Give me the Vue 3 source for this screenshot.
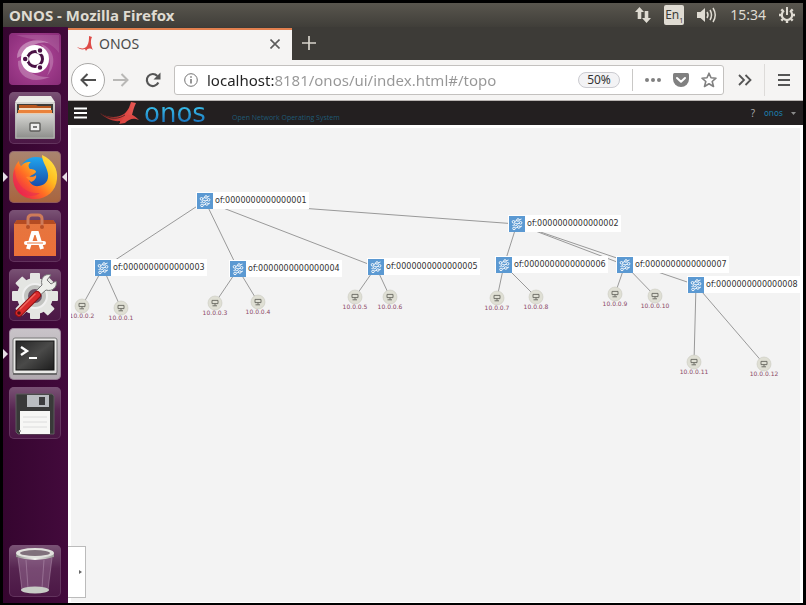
<script setup>
import { ref } from 'vue'

const address = ref('localhost:8181/onos/ui/index.html#/topo')

const devices = [
  { id: 1, x: 205, y: 201 },
  { id: 2, x: 517, y: 224 },
  { id: 3, x: 103, y: 268 },
  { id: 4, x: 238, y: 269 },
  { id: 5, x: 376, y: 267 },
  { id: 6, x: 504, y: 265 },
  { id: 7, x: 625, y: 265 },
  { id: 8, x: 696, y: 285 },
].map((d) => ({ ...d, label: 'of:' + String(d.id).padStart(16, '0') }))

const hosts = [
  { ip: '10.0.0.2', x: 82, y: 306, device: 3 },
  { ip: '10.0.0.1', x: 121, y: 308, device: 3 },
  { ip: '10.0.0.3', x: 215, y: 303, device: 4 },
  { ip: '10.0.0.4', x: 258, y: 302, device: 4 },
  { ip: '10.0.0.5', x: 355, y: 297, device: 5 },
  { ip: '10.0.0.6', x: 390, y: 297, device: 5 },
  { ip: '10.0.0.7', x: 497, y: 298, device: 6 },
  { ip: '10.0.0.8', x: 536, y: 297, device: 6 },
  { ip: '10.0.0.9', x: 615, y: 294, device: 7 },
  { ip: '10.0.0.10', x: 655, y: 296, device: 7 },
  { ip: '10.0.0.11', x: 694, y: 362, device: 8 },
  { ip: '10.0.0.12', x: 764, y: 364, device: 8 },
]

const device = (id) => devices.find((d) => d.id === id)

const links = [
  [1, 2], [1, 3], [1, 4], [1, 5], [2, 6], [2, 7], [2, 8],
].map(([a, b]) => ({ from: device(a), to: device(b) }))

const hostLinks = hosts.map((h) => ({ from: device(h.device), to: h }))
</script>

<template>
  <div class="screen">
    <header class="panel">
      <h1 class="window-title">ONOS - Mozilla Firefox</h1>
      <div class="tray">
        <svg class="tray-net" width="18" height="18" viewBox="0 0 18 18" aria-hidden="true">
          <path d="M5.500 1 L10 6 H7.300 V13 H3.700 V6 H1Z M12.500 17 L8 12 H10.700 V5 H14.300 V12 H17Z" />
        </svg>
        <span class="tray-lang">En<sub>1</sub></span>
        <svg width="22" height="18" viewBox="0 0 22 18" aria-hidden="true">
          <path d="M1 6 H4.500 L9 2 V16 L4.500 12 H1Z" />
          <g fill="none" stroke="#dfdbd2" stroke-width="1.500">
            <path d="M11 6 Q13 9 11 12" />
            <path d="M14 4 Q17 9 14 14" />
            <path d="M17 2 Q21.500 9 17 16" />
          </g>
        </svg>
        <time class="clock">15:34</time>
        <svg width="18" height="18" viewBox="0 0 18 18" aria-hidden="true">
          <g fill="none" stroke="#dfdbd2">
            <path d="M6 4.600 A5.200 5.200 0 1 0 12 4.600" stroke-width="2.200" />
            <path d="M9 1 V9" stroke-width="2" />
            <path d="M1 9 H3.500 M14.500 9 H17 M9 14.500 V17 M3.300 3.300 L5 5 M14.700 3.300 L13 5 M3.300 14.700 L5 13 M14.700 14.700 L13 13" stroke-width="2.400" />
          </g>
        </svg>
      </div>
    </header>

    <div class="desktop">
      <nav class="launcher" aria-label="Launcher">
        <button class="tile dash" aria-label="Dash">
          <svg viewBox="0 0 52 52">
            <defs>
              <radialGradient id="dashBg" cx="0.5" cy="0.5" r="0.75">
                <stop offset="0" stop-color="#b34a9b" />
                <stop offset="1" stop-color="#862a76" />
              </radialGradient>
            </defs>
            <rect width="52" height="52" rx="4" fill="url(#dashBg)" />
            <path d="M8 25 C8 10 25 3 40 10 C31 8 20 12 16 21Z" fill="#fff" opacity="0.35" />
            <path d="M32 11 C45 15 49 31 38 43 C43 32 41 24 36 17Z" fill="#fff" opacity="0.22" />
            <path d="M9 28 C8 43 22 52 41 44 C29 45 17 40 13 27Z" fill="#fff" opacity="0.25" />
            <path d="M7 2 C25 8 41 6 50 20 V2Z" fill="#fff" opacity="0.12" />
            <circle cx="26" cy="26" r="14" fill="#fff" />
            <circle cx="26" cy="26" r="7.500" fill="none" stroke="#4a1145" stroke-width="3" />
            <g fill="#4a1145" stroke="#fff" stroke-width="1.300">
              <circle cx="16.200" cy="26" r="2.900" />
              <circle cx="31" cy="17.500" r="2.900" />
              <circle cx="31" cy="34.500" r="2.900" />
            </g>
          </svg>
        </button>
        <button class="tile" aria-label="Files">
          <svg viewBox="0 0 52 52">
            <defs>
              <linearGradient id="cabinet" x2="0" y2="1">
                <stop offset="0" stop-color="#d6d6d3" />
                <stop offset="1" stop-color="#8d8e8b" />
              </linearGradient>
            </defs>
            <path d="M10 4 H42 L46 10 H6Z" fill="#ecece8" />
            <rect x="6" y="10" width="40" height="37" rx="1" fill="url(#cabinet)" />
            <rect x="8" y="12" width="36" height="11" fill="#3f3d3a" />
            <path d="M10 13 H27 L29 14 H42 V17 H10Z" fill="#b8571f" />
            <path d="M10 16 H42 V19 H10Z" fill="#f3e0c8" />
            <path d="M9 18 H43 V22 H9Z" fill="#ea823b" />
            <path d="M8 21 H44 V22 H8Z" fill="#f7cfa8" />
            <rect x="7" y="22" width="38" height="24" fill="url(#cabinet)" stroke="#c9c9c6" stroke-width="0.600" />
            <rect x="21" y="31" width="10" height="8" rx="1" fill="#eee" stroke="#5d5d5b" stroke-width="1.400" />
            <rect x="24" y="34" width="4" height="2" fill="#777" />
          </svg>
        </button>
        <button class="tile firefox active" aria-label="Firefox">
          <svg viewBox="0 0 52 52">
            <defs>
              <linearGradient id="foxTail" x1="1" y1="0" x2="0" y2="1">
                <stop offset="0" stop-color="#fff04d" />
                <stop offset="0.350" stop-color="#ffbc20" />
                <stop offset="0.600" stop-color="#ff6b25" />
                <stop offset="0.850" stop-color="#ef2749" />
                <stop offset="1" stop-color="#d71265" />
              </linearGradient>
              <linearGradient id="globe" x2="0" y2="1">
                <stop offset="0" stop-color="#20a5ef" />
                <stop offset="1" stop-color="#173f9e" />
              </linearGradient>
            </defs>
            <circle cx="27" cy="23" r="17" fill="url(#globe)" />
            <path d="M33 4 C44 9 49 18 48 28 C47 40 38 48 26 48 C13 48 4 39 4 26 C4 20 6 14 10 10 C10 13 11 14 12 15 C15 11 19 11 22 11 C19 13 19 16 21 18 C24 18 27 19 27 21 C25 24 21 24 20 27 C20 32 24 36 30 35 C38 34 41 27 38 19 C37 15 33 10 33 4Z" fill="url(#foxTail)" />
            <path d="M6 18 C6 34 17 43 31 42 C22 49 8 43 5 32 C3 27 4 22 6 18Z" fill="#e62756" opacity="0.500" />
            <path d="M17 26 C20 25 24 27 27 24 C28 27 25 30 22 31Z" fill="#ff8a2a" />
          </svg>
        </button>
        <button class="tile" aria-label="Ubuntu Software">
          <svg viewBox="0 0 52 52">
            <defs>
              <linearGradient id="bag" x2="0" y2="1">
                <stop offset="0" stop-color="#e5763f" />
                <stop offset="1" stop-color="#ec7039" />
              </linearGradient>
            </defs>
            <path d="M8 10 H44 L47 14 V46 H5 V14Z" fill="url(#bag)" />
            <path d="M8 10 H44 L47 14 H5Z" fill="#b44b22" />
            <path d="M19 17 V9 Q19 5 23 5 H29 Q33 5 33 9 V17" fill="none" stroke="#ce7b5a" stroke-width="3" />
            <circle cx="19" cy="17" r="2" fill="#b75027" />
            <circle cx="33" cy="17" r="2" fill="#b75027" />
            <g fill="none" stroke="#fff" stroke-width="4">
              <path d="M19 39 L24 23 H28 L33 39" />
              <path d="M17 33 H35" stroke-width="4" stroke-linecap="round" />
            </g>
            <path d="M18 33 H34" stroke="#e8743d" stroke-width="1" />
          </svg>
        </button>
        <button class="tile" aria-label="System Settings">
          <svg viewBox="0 0 52 52">
            <g fill="#e4e5e2">
              <circle cx="26" cy="27" r="18" />
              <rect v-for="a in 8" :key="a" x="21" y="4" width="10" height="10" rx="1" :transform="`rotate(${a * 45} 26 27)`" />
            </g>
            <circle cx="26" cy="27" r="12" fill="#c3c4c1" stroke="#f0f0f0" stroke-width="2" />
            <circle cx="26" cy="27" r="7" fill="#6a5064" />
            <path d="M25 24 L33 16 C31 9 36 4 42 6 L38 11 L42 15 L47 12 C49 18 43 23 37 21 L29 28Z" fill="#eeefeb" stroke="#777" stroke-width="1" />
            <path d="M28 26 L10 44" stroke="#8e1114" stroke-width="8" stroke-linecap="round" />
            <path d="M28 26 L10 44" stroke="#d82a2b" stroke-width="6" stroke-linecap="round" />
            <path d="M26 25 L11 40" stroke="#f06a62" stroke-width="1.500" stroke-linecap="round" />
            <circle cx="10" cy="44" r="1.800" fill="#501417" />
          </svg>
        </button>
        <button class="tile terminal running" aria-label="Terminal">
          <svg viewBox="0 0 52 52">
            <defs>
              <linearGradient id="term" x1="0" y1="0" x2="1" y2="1">
                <stop offset="0" stop-color="#262626" />
                <stop offset="0.500" stop-color="#4a4a49" />
                <stop offset="1" stop-color="#1d1d1d" />
              </linearGradient>
            </defs>
            <rect x="4" y="10" width="44" height="36" rx="2" fill="#e9e9e7" stroke="#777" />
            <rect x="7" y="13" width="38" height="29" fill="url(#term)" stroke="#151515" />
            <path d="M12 19 L18 23 L12 27" fill="none" stroke="#fff" stroke-width="2.400" />
            <path d="M20 30 H28" stroke="#fff" stroke-width="2" />
            <path d="M4 46 H48" stroke="#5b5b5b" stroke-width="1.500" />
          </svg>
        </button>
        <button class="tile" aria-label="Floppy disk">
          <svg viewBox="0 0 52 52">
            <path d="M7 7 H43 L45 9 V47 H9 L7 45Z" fill="#393939" stroke="#5d5d5d" />
            <rect x="18" y="8" width="22" height="12" fill="#b9bcc0" />
            <rect x="30" y="10" width="6" height="8" fill="#3d3d3f" />
            <rect x="11" y="24" width="30" height="23" fill="#f7f7f5" />
            <path d="M14 30 H38 M14 35 H38 M14 40 H38" stroke="#dcdcdc" />
            <rect x="10" y="43" width="2" height="2" fill="#aaa" />
          </svg>
        </button>
        <button class="tile trash" aria-label="Trash">
          <svg viewBox="0 0 52 52">
            <defs>
              <linearGradient id="rim" x2="1" y2="0">
                <stop offset="0" stop-color="#8f8f8c" />
                <stop offset="0.500" stop-color="#f3f3ef" />
                <stop offset="1" stop-color="#9b9b98" />
              </linearGradient>
            </defs>
            <path d="M9 12 L13 45 Q26 51 39 45 L43 12Z" fill="#b892b4" opacity="0.350" />
            <path d="M9 13 L13 45 M43 13 L39 45 M17 15 L19 43 M35 15 L33 43" stroke="#c7abc4" opacity="0.400" />
            <ellipse cx="26" cy="45" rx="14" ry="3.500" fill="#c7cbc5" />
            <path d="M7 8 V12 Q26 18 45 12 V8Z" fill="url(#rim)" />
            <ellipse cx="26" cy="8" rx="19" ry="5" fill="#e2e2de" />
            <ellipse cx="26" cy="8" rx="15" ry="3" fill="#80717c" />
          </svg>
        </button>
      </nav>

      <main class="browser">
        <div class="tabs">
          <div class="tab">
            <svg width="17" height="16" viewBox="0 0 17 16" aria-hidden="true">
              <path d="M0 11 C4 13 8 13 10 10 C12 7 12 3 12 0 L15 1 C13 5 14 10 16 14 C13 12 11 12 9 15 L8 13 C5 14 2 13 0 11Z" fill="#de4b47" />
            </svg>
            <span class="tab-title">ONOS</span>
            <button class="tab-close" aria-label="Close tab">
              <svg width="10" height="10" viewBox="0 0 10 10"><path d="M0.500 0.500 L9.500 9.500 M9.500 0.500 L0.500 9.500" stroke="#5c5c5c" stroke-width="1.600" /></svg>
            </button>
          </div>
          <button class="tab-new" aria-label="New tab">
            <svg width="14" height="14" viewBox="0 0 14 14"><path d="M7 0 V14 M0 7 H14" stroke="#d7d4cb" stroke-width="1.700" /></svg>
          </button>
        </div>

        <div class="toolbar">
          <button class="back" aria-label="Back">
            <svg width="16" height="14" viewBox="0 0 16 14"><path d="M16 7 H1.500 M7.500 1 L1.500 7 L7.500 13" fill="none" stroke="#4f4f4f" stroke-width="2" /></svg>
          </button>
          <button class="tool forward" aria-label="Forward">
            <svg width="16" height="14" viewBox="0 0 16 14"><path d="M0 7 H14.500 M8.500 1 L14.500 7 L8.500 13" fill="none" stroke="#b9b8b6" stroke-width="2" /></svg>
          </button>
          <button class="tool reload" aria-label="Reload">
            <svg width="16" height="16" viewBox="0 0 16 16"><path d="M13.300 10.500 A6 6 0 1 1 12.300 4" fill="none" stroke="#555" stroke-width="2.200" /><path d="M15.500 0.500 V7.500 H8.500Z" fill="#555" /></svg>
          </button>
          <div class="urlbar">
            <svg width="14" height="14" viewBox="0 0 14 14" aria-hidden="true">
              <circle cx="7" cy="7" r="6.300" fill="none" stroke="#737373" />
              <path d="M7 6 V10.500 M7 3.200 V4.800" stroke="#737373" stroke-width="1.500" />
            </svg>
            <input v-model="address" class="address" type="text" aria-label="Address" spellcheck="false" />
            <button class="zoom">50%</button>
            <span class="rule"></span>
            <button class="tool" aria-label="Page actions">
              <svg width="16" height="16" viewBox="0 0 16 16" fill="#808080"><circle cx="2" cy="8" r="2" /><circle cx="8" cy="8" r="2" /><circle cx="14" cy="8" r="2" /></svg>
            </button>
            <button class="tool" aria-label="Save to Pocket">
              <svg width="16" height="16" viewBox="0 0 16 16"><path d="M1.500 1 H14.500 Q16 1 16 2.500 V7 A8 8 0 0 1 0 7 V2.500 Q0 1 1.500 1Z" fill="#808080" /><path d="M4 6 L8 9.800 L12 6" fill="none" stroke="#fff" stroke-width="2" stroke-linecap="round" stroke-linejoin="round" /></svg>
            </button>
            <button class="tool" aria-label="Bookmark">
              <svg width="16" height="16" viewBox="0 0 16 16"><path d="M8 1.200 L10 5.800 L15 6.200 L11.200 9.500 L12.500 14.500 L8 11.800 L3.500 14.500 L4.800 9.500 L1 6.200 L6 5.800Z" fill="none" stroke="#808080" stroke-width="1.600" stroke-linejoin="round" /></svg>
            </button>
          </div>
          <button class="tool more" aria-label="More tools">
            <svg width="14" height="12" viewBox="0 0 14 12"><path d="M1 1 L6 6 L1 11 M7.500 1 L12.500 6 L7.500 11" fill="none" stroke="#555" stroke-width="1.800" /></svg>
          </button>
          <span class="rule tall"></span>
          <button class="tool menu" aria-label="Open menu">
            <svg width="12" height="12" viewBox="0 0 12 12"><path d="M0 1 H12 M0 6 H12 M0 11 H12" stroke="#555" stroke-width="2" /></svg>
          </button>
        </div>

        <div class="masthead">
          <button class="nav-toggle" aria-label="Navigation">
            <svg width="13" height="12" viewBox="0 0 13 12"><path d="M0 1.500 H13 M0 6 H13 M0 10.500 H13" stroke="#fff" stroke-width="2" /></svg>
          </button>
          <svg class="bird" width="40" height="24" viewBox="0 0 40 24" aria-hidden="true">
            <defs>
              <linearGradient id="birdRed" x2="1" y2="0">
                <stop offset="0" stop-color="#7e2422" />
                <stop offset="0.600" stop-color="#d9403c" />
                <stop offset="1" stop-color="#e75b56" />
              </linearGradient>
            </defs>
            <path d="M0 12 C8 17 18 17 24 13 C29 9 30 4 31 1 L36 2 C34 6 33 10 32 14 L34 15 L31 15 C26 17 25 20 20 22 L20 20 C13 21 5 17 0 12Z" fill="url(#birdRed)" />
            <path d="M25 15 C31 12 35 15 39 19 L36 18 C32 17 28 19 25 22 L19 23 L23 18Z" fill="#dd4944" />
            <path d="M2 13 C11 19 19 18 25 14" fill="none" stroke="#231f20" stroke-width="0.700" />
          </svg>
          <span class="wordmark">onos</span>
          <span class="tagline">Open Network Operating System</span>
          <a class="help" href="#help">?</a>
          <button class="user">onos <svg width="5" height="3" viewBox="0 0 5 3"><path d="M0 0 H5 L2.500 3Z" fill="#8b8b8b" /></svg></button>
        </div>

        <div class="view">
          <svg class="topology" viewBox="71 128 729 474" preserveAspectRatio="xMinYMin meet" role="img" aria-label="Network topology">
            <g class="links">
              <line v-for="(l, i) in links" :key="'d' + i" :x1="l.from.x" :y1="l.from.y" :x2="l.to.x" :y2="l.to.y" />
              <line v-for="(l, i) in hostLinks" :key="'h' + i" :x1="l.from.x" :y1="l.from.y" :x2="l.to.x" :y2="l.to.y" />
            </g>
            <g v-for="d in devices" :key="d.id" :transform="`translate(${d.x} ${d.y})`">
              <rect x="-9" y="-9" width="113" height="17" fill="#fff" />
              <rect x="-8" y="-8" width="16" height="16" fill="#5b99d2" />
              <g fill="none" stroke="#fff" stroke-width="0.900">
                <path d="M-2.300 -2.500 L0 -3.500 M2.300 -4.200 L4.500 -5 M-4.500 1.500 L-2.500 0.900 M0 0 L2.300 -0.800 M-1.700 4 L0.500 3.400 M3 2.800 L5 2" />
                <circle cx="-3.500" cy="-2.200" r="1.300" />
                <circle cx="1" cy="-4" r="1.300" />
                <circle cx="-1.200" cy="0.500" r="1.300" />
                <circle cx="3.600" cy="-1.200" r="1.300" />
                <circle cx="-3" cy="4.400" r="1.300" />
                <circle cx="1.800" cy="3" r="1.300" />
              </g>
              <text class="device-label" x="10" y="2">{{ d.label }}</text>
            </g>
            <g v-for="h in hosts" :key="h.ip" :transform="`translate(${h.x} ${h.y})`">
              <circle r="7" fill="#dfdfd4" stroke="#c9c9bf" stroke-width="0.600" />
              <path d="M-3 -2.600 H3 V0.600 H-3Z M0 0.600 V2.600 M-2.500 2.800 H2" fill="none" stroke="#66665f" stroke-width="0.900" />
              <text class="host-label" y="12">{{ h.ip }}</text>
            </g>
          </svg>
          <button class="drawer" aria-label="Open topology toolbar">
            <svg width="3" height="4" viewBox="0 0 3 4"><path d="M0 0 L3 2 L0 4Z" fill="#666" /></svg>
          </button>
        </div>
      </main>
    </div>
  </div>
</template>

<style>
body {
  margin: 0;
  background: #000;
}
</style>

<style scoped>
.screen {
  box-sizing: border-box;
  min-height: 100vh;
  padding: 3px 3px 2px;
  display: flex;
  flex-direction: column;
  background: #000;
  font-family: "Noto Sans", "Open Sans", sans-serif;
}

button {
  display: flex;
  align-items: center;
  justify-content: center;
  margin: 0;
  padding: 0;
  border: 0;
  background: none;
  font: inherit;
  color: inherit;
}

.panel {
  display: flex;
  align-items: center;
  justify-content: space-between;
  height: 24px;
  padding: 0 7px 0 6px;
  background: linear-gradient(#59564e, #403e39);
  color: #dfdbd2;
}

.window-title {
  margin: 0;
  font-size: 15px;
  font-weight: 700;
  line-height: 24px;
}

.tray {
  display: flex;
  align-items: center;
  gap: 12px;
  fill: #dfdbd2;
}

.tray-lang {
  display: flex;
  align-items: center;
  justify-content: center;
  width: 20px;
  height: 20px;
  border-radius: 2px;
  background: #dfdbd2;
  color: #3c3b37;
  font-size: 12px;
  line-height: 20px;
}

.tray-lang sub {
  align-self: flex-end;
  font-size: 7px;
  line-height: 9px;
}

.clock {
  font-size: 14px;
  line-height: 24px;
}

.desktop {
  flex: 1;
  display: flex;
}

.launcher {
  box-sizing: border-box;
  flex: none;
  display: flex;
  flex-direction: column;
  gap: 7px;
  width: 65px;
  padding: 6px 6px 6px;
  background: linear-gradient(90deg, #35052f, #430a3c);
}

.tile {
  position: relative;
  width: 52px;
  height: 52px;
  border-radius: 5px;
  background: linear-gradient(#7a5375, #562450 45%, #4b1745);
  box-shadow: inset 0 0 0 1px #79507580;
}

.tile svg {
  width: 52px;
  height: 52px;
}

.firefox {
  background: linear-gradient(#a98570, #a8643e);
}

.terminal {
  background: linear-gradient(#c9c4c9, #b0a9af);
}

.trash {
  margin-top: auto;
}

.active::before,
.running::before,
.active::after {
  content: "";
  position: absolute;
  top: 21px;
  border: 5px solid transparent;
}

.active::before,
.running::before {
  left: -6px;
  border-right-width: 0;
  border-left-color: #e6dde5;
}

.active::after {
  right: -6px;
  border-left-width: 0;
  border-right-color: #e6dde5;
}

.browser {
  flex: 1;
  min-width: 0;
  display: flex;
  flex-direction: column;
  background: #f2f1f0;
}

.tabs {
  display: flex;
  height: 33px;
  background: #3d3b37;
}

.tab {
  box-sizing: border-box;
  display: flex;
  align-items: center;
  gap: 5px;
  width: 224px;
  margin-top: 1px;
  padding: 0 12px 3px 9px;
  border-top: 2px solid #e2804f;
  background: #f5f4f3;
  color: #4c4c4c;
}

.tab-title {
  flex: 1;
  font-size: 14px;
}

.tab-new {
  width: 34px;
  height: 32px;
}

.toolbar {
  box-sizing: border-box;
  display: flex;
  align-items: center;
  height: 41px;
  padding: 0 13px 0 3px;
  border-bottom: 1px solid #b9b4b2;
  background: #f5f4f3;
}

.back {
  box-sizing: border-box;
  flex: none;
  width: 34px;
  height: 34px;
  border: 1px solid #aaa9a7;
  border-radius: 50%;
  background: #fff;
}

.forward {
  margin-left: 8px;
}

.reload {
  margin: 0 13px 0 16px;
}

.urlbar {
  box-sizing: border-box;
  flex: 1;
  min-width: 0;
  display: flex;
  align-items: center;
  gap: 12px;
  height: 30px;
  padding: 0 6px 0 9px;
  border: 1px solid #c3c1bf;
  border-radius: 3px;
  background: #fff;
}

.urlbar svg {
  flex: none;
}

.address {
  flex: 1;
  min-width: 0;
  height: 26px;
  margin-left: -3px;
  padding: 0;
  border: 0;
  outline: 0;
  background: linear-gradient(90deg, #222 67px, #969696 67px);
  background-clip: text;
  -webkit-background-clip: text;
  color: transparent;
  font-family: inherit;
  font-size: 15px;
}

.zoom {
  box-sizing: border-box;
  width: 42px;
  height: 16px;
  border: 1px solid #cbcbd0;
  border-radius: 8px;
  background: #f3f3f5;
  color: #333;
  font-size: 12px;
  line-height: 14px;
}

.rule {
  flex: none;
  width: 1px;
  height: 22px;
  background: #c9c8c6;
}

.tall {
  height: 32px;
  background: #dddbd9;
}

.more {
  margin: 0 12px 0 14px;
}

.menu {
  margin-left: 13px;
}

.masthead {
  display: flex;
  align-items: center;
  height: 24px;
  padding: 0 7px 0 6px;
  background: #231f20;
}

.bird {
  flex: none;
  margin: 0 4px 0 13px;
}

.wordmark {
  width: 88px;
  background: linear-gradient(#35b4e4 35%, #1b78c0 85%);
  background-clip: text;
  -webkit-background-clip: text;
  color: transparent;
  font-family: "DejaVu Sans", sans-serif;
  font-size: 26px;
  line-height: 24px;
}

.tagline {
  flex: 1;
  padding-top: 9px;
  color: #1f5a75;
  font-family: "Open Sans", sans-serif;
  font-size: 7px;
  line-height: 10px;
  white-space: nowrap;
}

.help {
  color: #a8a8a8;
  font-size: 10px;
  text-decoration: none;
}

.user {
  gap: 8px;
  margin-left: 9px;
  color: #1b7dab;
  font-family: "DejaVu Sans", sans-serif;
  font-size: 8px;
}

.view {
  position: relative;
  flex: 1;
  display: flex;
  min-height: 240px;
  padding: 3px 3px 1px;
  background: #fff;
}

.topology {
  flex: 1;
  min-width: 0;
  background: #f3f3f3;
}

.links line {
  stroke: #999;
  stroke-width: 1;
}

.device-label {
  fill: #333;
  font-family: "DejaVu Sans", sans-serif;
  font-size: 8px;
}

.host-label {
  fill: #8a4763;
  font-family: "DejaVu Sans", sans-serif;
  font-size: 6px;
  text-anchor: middle;
}

.drawer {
  box-sizing: border-box;
  position: absolute;
  left: 0;
  bottom: 5px;
  width: 18px;
  height: 52px;
  padding-left: 7px;
  border: 1px solid #bbb;
  border-left: 0;
  background: #fff;
}
</style>
